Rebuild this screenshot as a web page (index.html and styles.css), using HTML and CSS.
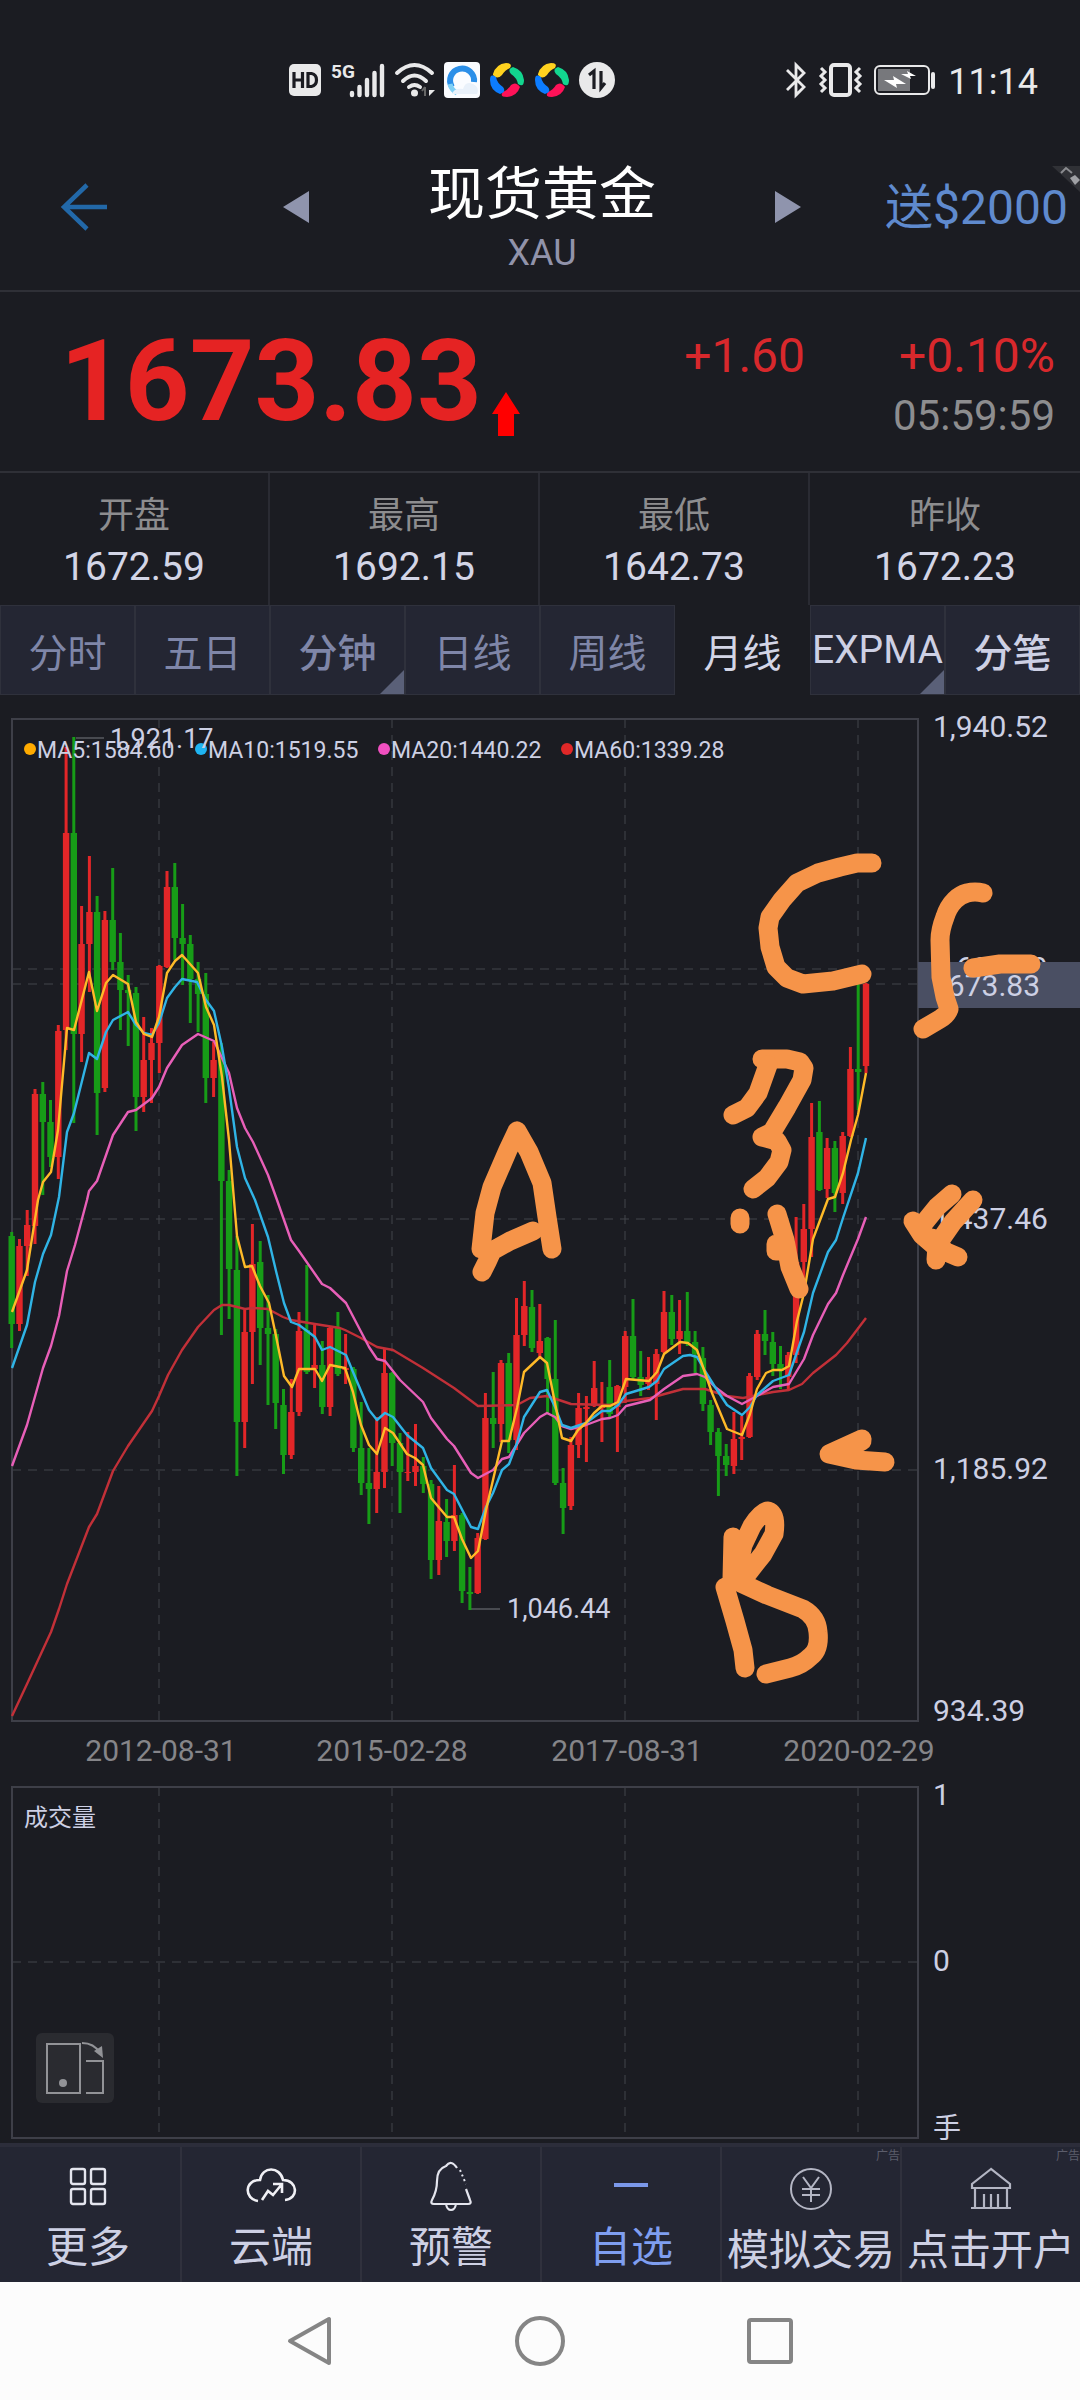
FILE: index.html
```html
<!DOCTYPE html>
<html lang="zh-CN">
<head>
<meta charset="utf-8">
<meta name="viewport" content="width=device-width, initial-scale=1">
<title>现货黄金 XAU</title>
<link rel="stylesheet" href="styles.css">
</head>
<body>
<div class="status">
  <div class="status-group">
    <svg width="32" height="32" viewBox="0 0 32 32"><rect width="32" height="32" rx="5" fill="#e9e9ea"/><path d="M5 8v16M13.500 8v16M5 16h8.500M19 9.500v13h3.500q5-1 5-6.500t-5-6.500z" fill="none" stroke="#1b1c22" stroke-width="3.200"/></svg>
    <svg width="56" height="36" viewBox="0 0 56 36"><text class="net" x="1" y="16">5G</text><path d="M22 31v2M29.500 25v8M37 18v15M44.500 11v22M52 4v29" stroke="#e9e9ea" stroke-width="4.400" stroke-linecap="round"/></svg>
    <svg width="40" height="34" viewBox="0 0 40 34"><g fill="none" stroke="#e9e9ea" stroke-width="4" stroke-linecap="round"><path d="M2 10Q19.500-6 37 10M8 18Q19.500 7 31 18M14 24Q19.500 20 25 24"/></g><circle cx="19.500" cy="30" r="3.500" fill="#e9e9ea"/><path d="M30 24v9M27 28l3-4" stroke="#666" stroke-width="2" fill="none"/><path d="M34 24v9l6-6h-6z" fill="#e9e9ea"/></svg>
    <svg width="36" height="36" viewBox="0 0 36 36"><rect width="36" height="36" rx="4" fill="#fafcff"/><path d="M8 25a12 12 0 1 1 22-5" fill="none" stroke="#2b8fe8" stroke-width="6"/><path d="M13 31a14 14 0 0 1-7-9" fill="none" stroke="#7fd0f5" stroke-width="5"/><path d="M8 32q2-6 11-5 2-7 7-6 8 2 8 8l-1 3z" fill="#e9f1fa"/></svg>
    <svg width="36" height="36" viewBox="0 0 36 36"><use href="#wheel"/></svg>
    <svg width="36" height="36" viewBox="0 0 36 36"><g id="wheel"><path d="M4 12Q7 2 17 1q7 0 4 5-5 2-8 7-5 5-9 0z" fill="#ffd21f"/><path d="M24 5q10 3 11 13 0 8-6 4-1-6-7-10-4-5 2-7z" fill="#12d68f"/><path d="M31 25q-3 9-13 10-8 0-4-5 5-2 8-7 5-4 9 2z" fill="#ff1258"/><path d="M11 32Q1 28 1 18q0-7 6-3 1 6 7 10 4 5-3 7z" fill="#0c7cff"/></g></svg>
    <svg width="36" height="36" viewBox="0 0 36 36"><circle cx="18" cy="18" r="18" fill="#e9e9ea"/><path d="M10 13l5-4v18M22 9v17l4-5" fill="none" stroke="#1b1c22" stroke-width="3.200"/></svg>
  </div>
  <div class="status-group">
    <svg width="22" height="36" viewBox="0 0 22 36"><path d="M2 8l17 17-8 8V3l8 8L2 28" fill="none" stroke="#e9e9ea" stroke-width="2.800"/></svg>
    <svg width="43" height="34" viewBox="0 0 43 34"><rect x="12" y="2" width="19" height="30" rx="3" fill="none" stroke="#e9e9ea" stroke-width="4"/><path d="M2 5l4 4-4 4 4 4-4 4 4 4-4 4M41 5l-4 4 4 4-4 4 4 4-4 4 4 4" fill="none" stroke="#e9e9ea" stroke-width="3"/></svg>
    <svg width="62" height="30" viewBox="0 0 62 30"><rect x="1" y="1" width="54" height="28" rx="5" fill="none" stroke="#e9e9ea" stroke-width="2"/><rect x="4" y="4" width="32" height="22" fill="#77787c"/><path d="M10 15h10l-1-4 13 8H22l1 4zM27 9h7l-1-3 9 5h-6l1 3z" fill="#fff"/><rect x="57" y="7" width="4" height="17" rx="2" fill="#e9e9ea"/></svg>
    <span class="clock">11:14</span>
  </div>
</div>

<header class="header">
  <button class="back" aria-label="返回"><svg width="48" height="48" viewBox="0 0 48 48"><path d="M46 24H4M26 2L3 24l23 22" fill="none" stroke="#2268a8" stroke-width="4.500"/></svg></button>
  <div class="instrument">
    <button aria-label="上一个"><svg width="26" height="32" viewBox="0 0 26 32"><path d="M26 0v32L0 16z" fill="#8f94ad"/></svg></button>
    <div class="name"><h1>现货黄金</h1><p>XAU</p></div>
    <button aria-label="下一个"><svg width="26" height="32" viewBox="0 0 26 32"><path d="M0 0v32l26-16z" fill="#8f94ad"/></svg></button>
  </div>
  <a class="promo" href="#">送$2000</a>
  <svg class="corner" width="28" height="28" viewBox="0 0 28 28"><path d="M0 0h28v26z" fill="#303136"/><path d="M9 7l5-5 6 5" fill="none" stroke="#8b8c90" stroke-width="2"/><path d="M18 12l5-3 5 5-5 5z" fill="#a0a1a5"/></svg>
</header>

<section class="quote">
  <strong class="last">1673.83</strong>
  <svg class="up" width="28" height="44" viewBox="0 0 28 44"><path d="M14 0l14 22h-6v22H6V22H0z" fill="#f00"/></svg>
  <div class="change">
    <span>+1.60</span><span>+0.10%</span>
    <time>05:59:59</time>
  </div>
</section>

<dl class="stats">
  <div><dt>开盘</dt><dd>1672.59</dd></div>
  <div><dt>最高</dt><dd>1692.15</dd></div>
  <div><dt>最低</dt><dd>1642.73</dd></div>
  <div><dt>昨收</dt><dd>1672.23</dd></div>
</dl>

<nav class="tabs">
  <button>分时</button>
  <button>五日</button>
  <button class="more strong">分钟</button>
  <button>日线</button>
  <button>周线</button>
  <button class="active">月线</button>
  <button class="more light">EXPMA</button>
  <button class="light strong">分笔</button>
</nav>

<main>
<svg class="chart" viewBox="0 695 1080 1080" role="img" aria-label="月线图">
  <g class="grid">
    <path d="M12 969H918M12 984H918M12 1219H918M12 1470H918"/>
    <path d="M159 719V1720M392 719V1720M625 719V1720M858 719V1720"/>
  </g>
  <rect class="frame" x="12" y="719" width="906" height="1002"/>
  <path class="lead" d="M76 738H104M470 1609H500"/>
  <g id="candles"></g>
  <g class="ma">
    <path stroke="#c23038" d="M12 1716L27 1684 51 1632 59 1609 67 1584 89 1527 97 1514 113 1471 128 1446 152 1411 159 1396 168 1375 182 1350 198 1327 214 1310 222 1305 229 1305 245 1309 253 1308 268 1309 283 1317 291 1320 315 1324 340 1328 345 1330 361 1338 377 1347 393 1350 423 1368 454 1388 478 1406 517 1405 530 1398 547 1396 571 1404 610 1405 626 1401 650 1398 683 1389 705 1389 727 1396 743 1398 773 1392 789 1390 802 1384 813 1373 836 1355 847 1343 866 1318"/>
    <path stroke="#e85fb8" d="M12 1466L27 1425 43 1368 51 1346 59 1316 67 1271 75 1245 87 1200 89 1191 97 1181 113 1135 128 1112 136 1110 152 1098 159 1087 167 1068 182 1045 198 1034 214 1041 229 1073 237 1108 245 1128 253 1142 268 1175 277 1200 284 1220 291 1240 299 1251 322 1284 330 1288 346 1303 369 1347 377 1359 385 1361 400 1380 423 1402 431 1418 447 1439 454 1446 471 1473 478 1478 493 1470 502 1459 509 1457 524 1433 540 1417 547 1413 555 1417 562 1426 571 1429 586 1425 602 1419 610 1418 618 1415 626 1406 650 1400 664 1389 683 1376 697 1374 705 1377 715 1387 727 1396 742 1404 757 1396 773 1387 789 1384 804 1359 813 1335 828 1304 836 1293 843 1275 858 1239 866 1217"/>
    <path stroke="#30b4e6" d="M12 1368L27 1325 35 1282 43 1254 51 1235 59 1197 67 1132 74 1113 89 1053 97 1059 106 1032 113 1020 128 1012 136 1025 144 1033 152 1035 159 1023 167 998 175 987 182 979 197 982 206 1000 214 1011 222 1047 229 1088 237 1147 245 1178 255 1200 268 1237 276 1271 284 1303 291 1322 299 1325 315 1337 322 1350 330 1347 346 1355 353 1372 369 1410 377 1420 385 1413 393 1417 407 1435 423 1448 431 1468 447 1490 454 1494 471 1527 478 1529 486 1507 493 1493 502 1470 509 1464 517 1443 524 1417 540 1392 547 1390 555 1407 562 1425 571 1428 586 1423 602 1411 610 1411 618 1405 626 1394 649 1387 657 1381 664 1369 683 1356 690 1355 697 1357 705 1371 715 1387 727 1405 742 1415 750 1407 757 1395 773 1381 789 1375 797 1352 804 1332 813 1293 828 1252 836 1240 843 1218 858 1173 866 1138"/>
    <path stroke="#ffba28" d="M12 1312L27 1270 38 1200 43 1182 51 1172 58 1130 67 1028 74 1030 89 972 97 1011 106 983 113 975 128 984 136 1022 144 1034 152 1037 159 1017 167 973 175 961 182 955 198 973 206 1007 214 1025 222 1077 229 1140 234 1200 237 1236 245 1267 252 1266 260 1286 269 1303 276 1336 284 1376 292 1387 299 1369 315 1369 322 1381 330 1365 345 1368 353 1392 361 1425 369 1445 377 1454 385 1428 393 1433 407 1454 415 1458 423 1465 431 1498 447 1517 454 1517 462 1539 471 1558 478 1551 486 1510 493 1480 502 1441 509 1441 517 1408 524 1372 540 1357 547 1363 555 1403 562 1438 571 1441 578 1430 586 1423 594 1413 602 1406 610 1406 618 1402 626 1379 649 1381 657 1372 664 1354 680 1342 688 1343 697 1350 703 1367 712 1393 727 1429 742 1435 750 1414 757 1389 766 1373 773 1370 782 1370 789 1366 797 1321 804 1293 813 1239 828 1199 835 1197 843 1173 851 1140 858 1115 866 1073"/>
  </g>
  <g class="legend">
    <circle cx="30" cy="749" r="6" fill="#ffab00"/><text x="37" y="758">MA5:1584.60</text>
    <circle cx="201" cy="749" r="6" fill="#1fb4f2"/><text x="208" y="758">MA10:1519.55</text>
    <circle cx="384" cy="749" r="6" fill="#f04fc0"/><text x="391" y="758">MA20:1440.22</text>
    <circle cx="567" cy="749" r="6" fill="#e02828"/><text x="574" y="758">MA60:1339.28</text>
  </g>
  <g class="mark"><text x="110" y="748">1,921.17</text><text x="507" y="1618">1,046.44</text></g>
  <g class="axis">
    <text x="933" y="737">1,940.52</text>
    <text x="933" y="978">1,688.99</text>
    <rect x="918" y="962" width="162" height="46" fill="#4a4f63"/>
    <text x="931" y="996">1673.83</text>
    <text x="933" y="1229">1,437.46</text>
    <text x="933" y="1479">1,185.92</text>
    <text x="933" y="1721">934.39</text>
  </g>
  <g class="dates">
    <text x="161" y="1761">2012-08-31</text>
    <text x="392" y="1761">2015-02-28</text>
    <text x="627" y="1761">2017-08-31</text>
    <text x="859" y="1761">2020-02-29</text>
  </g>
  <g class="ink">
    <path d="M872 863L857 863 840 867 818 873 797 883 782 900 770 917 768 928 770 947 776 967 787 978 803 984 833 981 862 974"/>
    <path d="M983 893Q975 891 967 893 960 895 955 900 948 907 945 917 940 930 940 940L941 977 945 997 949 1009Q947 1015 940 1019L923 1029"/>
    <path d="M973 968L1000 964H1031"/>
    <path d="M762 1059H787L800 1062 804 1068 802 1080 787 1107 772 1132 762 1137 777 1141 782 1150 779 1162 767 1178 753 1189"/>
    <path d="M768 1065L758 1093 747 1108 733 1115M740 1218V1224M777 1214L785 1240 790 1267 799 1289M776 1244V1251L785 1250"/>
    <path d="M952 1194L937 1207 924 1223M913 1221L922 1235 937 1248 958 1257M973 1200L953 1222 937 1245 936 1260M932 1238L944 1250"/>
    <path d="M517 1131L508 1150 492 1187 485 1213 481 1249 492 1251 510 1241 533 1231M492 1251L487 1262 482 1272M517 1131L529 1152 542 1183 547 1217 552 1249"/>
    <path d="M862 1439L829 1454 856 1460 885 1462M862 1441L840 1453"/>
    <path d="M733 1537L732 1579M743 1545L752 1526Q762 1511 768 1511 777 1514 774 1534L763 1554 748 1573 737 1580M743 1545L737 1572M741 1583L767 1595 803 1609Q817 1617 818 1632 820 1650 810 1657 802 1665 790 1668L766 1674M725 1587L735 1621 743 1650 745 1668"/>
  </g>
</svg>
<div class="volume">
  <svg class="chart" viewBox="0 1775 1080 368" role="img" aria-label="成交量">
    <path class="grid" d="M12 1962H918M159 1787V2138M392 1787V2138M625 1787V2138M858 1787V2138"/>
    <rect class="frame" x="12" y="1787" width="906" height="351"/>
    <text class="legend" x="24" y="1826">成交量</text>
    <g class="axis"><text x="933" y="1805">1</text><text x="933" y="1971">0</text><text class="unit" x="933" y="2138">手</text></g>
  </svg>
  <button class="rotate" aria-label="横屏"><svg width="78" height="70" viewBox="0 0 78 70"><g fill="none" stroke="#929397" stroke-width="2"><path d="M11 11h33v49H11zM50 28h17v32H50"/><path d="M46 10q12 0 18 10"/></g><path d="M58 18l8-5 1 12z" fill="#929397"/><circle cx="27" cy="50" r="4" fill="#929397"/></svg></button>
</div>
</main>

<nav class="dock">
  <a href="#"><svg width="40" height="50" viewBox="0 0 40 50"><g fill="none" stroke="#e4e5ee" stroke-width="2.400"><rect x="3" y="7" width="14" height="15" rx="2"/><rect x="23" y="7" width="14" height="15" rx="2"/><rect x="3" y="27" width="14" height="15" rx="2"/><rect x="23" y="27" width="14" height="15" rx="2"/></g></svg><span>更多</span></a>
  <a href="#"><svg width="50" height="50" viewBox="0 0 50 50"><path d="M12 39C-2 37-2 18 14 18 16 4 34 4 37 18 52 18 53 37 39 38M16 38l6-9 5 4 9-11M27 22h9v9" fill="none" stroke="#f0f0f5" stroke-width="2.600"/></svg><span>云端</span></a>
  <a href="#"><svg width="44" height="50" viewBox="0 0 44 50"><path d="M28 6Q22-3 17 4 8 7 8 19 8 29 3 38q-2 4 2 4h34q4 0 2-4l-4-11" fill="none" stroke="#e4e5ee" stroke-width="2.200"/><path d="M31 8l6 14" fill="none" stroke="#e4e5ee" stroke-width="2" stroke-dasharray="2 3"/><path d="M17 42q1 6 5 6t5-6" fill="none" stroke="#e4e5ee" stroke-width="2"/></svg><span>预警</span></a>
  <a href="#" class="current"><svg width="36" height="50" viewBox="0 0 36 50"><path d="M1 23h34" stroke="#7b98ea" stroke-width="4"/></svg><span>自选</span></a>
  <a href="#" class="ad"><i>广告</i><svg width="44" height="50" viewBox="0 0 44 50"><g fill="none" stroke="#b4b6c4" stroke-width="2"><circle cx="22" cy="24" r="20"/><path d="M14 12l8 11 8-11M22 23v14M13 24h18M13 30h18"/></g></svg><span>模拟交易</span></a>
  <a href="#" class="ad"><i>广告</i><svg width="44" height="50" viewBox="0 0 44 50"><path d="M22 4L3 19v4h38v-4zM6 23v19M15 29v13M22 29v13M29 29v13M38 23v19M2 43h40" fill="none" stroke="#b4b6c4" stroke-width="2.200"/></svg><span>点击开户</span></a>
</nav>

<footer class="system">
  <button aria-label="后退"><svg width="46" height="50" viewBox="0 0 46 50"><path d="M42 3v44L3 25z" fill="none" stroke="#858585" stroke-width="4" stroke-linejoin="round"/></svg></button>
  <button aria-label="主屏幕"><svg width="50" height="50" viewBox="0 0 50 50"><circle cx="25" cy="25" r="23" fill="none" stroke="#858585" stroke-width="4"/></svg></button>
  <button aria-label="最近任务"><svg width="46" height="46" viewBox="0 0 46 46"><rect x="2" y="2" width="42" height="42" rx="2" fill="none" stroke="#858585" stroke-width="4"/></svg></button>
</footer>
<script src="chart.js"></script>
</body>
</html>
```
FILE: styles.css
```css
* { box-sizing: border-box; margin: 0; padding: 0; }
body {
  display: flex;
  flex-direction: column;
  min-height: 100vh;
  background: #1b1c22;
  color: #d3d5e6;
  font-family: Roboto, "Noto Sans CJK SC", sans-serif;
}
button { border: 0; background: none; font: inherit; color: inherit; cursor: pointer; }
a { color: inherit; text-decoration: none; }
svg { display: block; flex: none; overflow: visible; }

.status { display: flex; justify-content: space-between; align-items: center; height: 160px; padding: 0 42px 0 289px; }
.status-group { display: flex; align-items: center; gap: 9px; }
.status-group + .status-group { gap: 12px; }
.net { font-size: 19px; font-weight: 700; fill: #e9e9ea; }
.clock { font-size: 36px; line-height: 40px; padding-top: 4px; color: #e9e9ea; }

.header {
  position: relative;
  display: grid;
  grid-template-columns: 1fr 48% 1fr;
  align-items: center;
  height: 132px;
  border-bottom: 2px solid #2f3037;
}
.back { justify-self: start; padding: 0 0 36px 61px; }
.instrument { display: flex; justify-content: space-between; align-items: center; padding-left: 2px; margin-right: -2px; }
.instrument button { padding-bottom: 36px; }
.name { text-align: center; padding-bottom: 4px; }
.name h1 { font-size: 57px; font-weight: 400; line-height: 60px; color: #fff; }
.name p { font-size: 36px; line-height: 56px; color: #9193aa; }
.promo { justify-self: end; padding: 0 12px 34px 0; font-size: 48px; line-height: 56px; color: #5f8ace; white-space: nowrap; }
.corner { position: absolute; top: 6px; right: 0; }

.quote { display: flex; align-items: center; height: 181px; padding: 0 25px 0 60px; border-bottom: 2px solid #2f3037; }
.last { font-size: 113px; line-height: 120px; font-weight: 700; color: #e52323; }
.up { margin: 64px 0 0 10px; }
.change { display: grid; grid-template-columns: auto auto; column-gap: 94px; margin-left: auto; padding-top: 8px; text-align: right; font-size: 48px; line-height: 60px; color: #d8282c; }
.change time { grid-column: 1 / -1; font-size: 42px; line-height: 60px; color: #8d8d8f; }

.stats { display: grid; grid-template-columns: repeat(4, 1fr); }
.stats div { height: 132px; padding-top: 18px; text-align: center; border-right: 2px solid #2a2b33; }
.stats div:last-child { border-right: 0; }
.stats dt { font-size: 36px; line-height: 50px; color: #8d8d8f; }
.stats dd { font-size: 39px; line-height: 52px; }

.tabs { display: grid; grid-template-columns: repeat(8, 1fr); height: 90px; }
.tabs button { position: relative; min-width: 0; font-size: 39px; background: #242633; border: 1px solid #2f313c; color: #7f86a8; white-space: nowrap; }
.tabs .strong { font-weight: 500; }
.tabs .active { background: #1b1c22; border-color: #1b1c22; color: #d3d5e6; }
.tabs .light { color: #cdd0e4; }
.tabs .more::after {
  content: "";
  position: absolute;
  right: 0;
  bottom: 0;
  border-style: solid;
  border-width: 0 0 24px 24px;
  border-color: transparent transparent #5a6078 transparent;
}

.chart { width: 100%; height: auto; }
.chart .frame { fill: none; stroke: #3e3f48; stroke-width: 2; }
.chart .grid { fill: none; stroke: #43444b; stroke-width: 1; stroke-dasharray: 9 7; }
.chart .lead { stroke: #77787f; stroke-width: 1; }
.chart text { fill: #cdd0e4; font-size: 30px; }
.chart .legend text { font-size: 23px; }
.chart text.legend { font-size: 24px; }
.chart .mark text { font-size: 27px; }
.chart text.unit { font-size: 28px; }
.chart .dates text { fill: #858589; text-anchor: middle; }
.ma path { fill: none; stroke-width: 2.400; stroke-linejoin: round; }
.ink path { fill: none; stroke: #f69449; stroke-width: 19; stroke-linecap: round; stroke-linejoin: round; }
.wick { fill: none; stroke-width: 3; }
.body { fill: none; stroke-width: 6.400; }
.rise { stroke: #e32628; }
.fall { stroke: #179c17; }

.volume { position: relative; }
.rotate { position: absolute; left: 36px; bottom: 40px; background: #2a2b30; border-radius: 6px; }

.dock { display: grid; grid-template-columns: repeat(6, 1fr); height: 139px; background: #242633; border-top: 4px solid #2c2d3a; }
.dock a { position: relative; display: flex; flex-direction: column; align-items: center; padding-top: 15px; border-left: 2px solid #30313d; font-size: 42px; line-height: 56px; white-space: nowrap; }
.dock a:first-child { border-left: 0; padding-right: 4px; }
.dock span { margin-top: 8px; color: #cdd0e4; }
.dock .current span { color: #7f9ef0; }
.dock .ad { padding-top: 18px; }
.dock i { position: absolute; top: 1px; right: 0; font-size: 12px; line-height: 16px; font-style: normal; color: #5b5d6b; }

.system { flex: 1; display: flex; justify-content: center; align-items: center; gap: 182px; min-height: 118px; background: #fcfcfc; }
```
FILE: chart.js
```js
// Monthly candles, oldest first: direction, high, body top, body bottom, low.
const rows = `f1232 1236 1324 1348,r1239 1246 1324 1331,r1210 1225 1246 1276,r1089 1094 1226 1244,f1082 1094 1122 1195,
f1100 1122 1157 1167,r1025 1031 1157 1179,r747 833 1030 1050,f737 833 1034 1123,r906 944 1034 1062,
r856 912 944 992,f896 912 1093 1135,r911 920 1088 1092,f868 920 962 970,f933 962 990 1030,
f975 990 993 1046,f987 993 1097 1131,r1017 1060 1097 1112,r1028 1043 1060 1103,r965 966 1043 1073,
r871 887 967 968,f863 887 938 960,f904 938 944 985,f935 944 979 1023,f962 979 994 1032,
f973 994 1078 1103,r1042 1060 1078 1097,f1043 1060 1181 1335,f1170 1181 1269 1319,f1236 1270 1422 1476,
r1310 1332 1422 1448,r1224 1264 1332 1384,f1241 1262 1328 1365,f1295 1328 1334 1405,f1329 1334 1403 1429,
f1389 1405 1455 1474,r1379 1412 1455 1459,r1312 1331 1412 1416,f1265 1330 1372 1374,r1325 1365 1369 1388,
f1341 1365 1407 1414,r1327 1328 1407 1416,f1312 1328 1374 1376,r1334 1368 1370 1384,f1367 1369 1448 1452,
f1402 1448 1483 1495,f1448 1483 1489 1524,r1417 1472 1489 1513,r1348 1373 1472 1488,f1372 1373 1443 1466,
f1433 1443 1472 1513,r1432 1472 1473 1481,r1424 1466 1472 1486,f1457 1466 1484 1493,f1480 1484 1560 1579,
r1486 1521 1560 1575,f1499 1522 1541 1557,r1465 1515 1541 1551,f1513 1515 1591 1603,f1567 1592 1594 1610,
r1533 1538 1593 1594,r1393 1418 1539 1540,f1372 1418 1424 1448,r1360 1363 1424 1442,f1353 1363 1440 1453,
r1298 1335 1440 1450,r1281 1306 1335 1346,f1290 1307 1348 1352,r1304 1341 1353 1357,f1337 1338 1379 1413,
f1320 1379 1483 1485,f1468 1483 1508 1534,r1437 1445 1506 1510,r1393 1408 1445 1458,r1396 1407 1409 1462,
r1361 1388 1406 1407,r1382 1406 1408 1442,f1360 1387 1414 1418,r1385 1386 1407 1452,r1331 1336 1387 1403,
f1299 1336 1377 1380,f1351 1377 1385 1396,r1357 1377 1384 1390,r1349 1354 1384 1420,r1291 1312 1352 1353,
f1295 1312 1339 1345,r1300 1331 1339 1354,f1292 1331 1342 1346,f1331 1342 1354 1373,f1347 1358 1404 1411,
f1400 1405 1432 1445,f1428 1432 1456 1496,f1444 1456 1465 1476,r1412 1439 1466 1474,r1416 1437 1439 1460,
r1373 1376 1437 1438,r1330 1334 1377 1380,f1310 1334 1341 1355,f1332 1342 1364 1376,f1346 1364 1371 1389,
r1352 1355 1377 1390,r1217 1262 1355 1363,r1204 1229 1262 1279,r1103 1137 1229 1257,f1101 1132 1190 1191,
r1138 1148 1189 1198,f1141 1148 1193 1212,r1132 1136 1193 1204,r1047 1069 1136 1137,f984 1069 1072 1110,
r983 984 1066 1073`.split(",").map(r => r.trim());

const first = 11.7;
const step = 7.766;
const paths = { r: { wick: "", body: "" }, f: { wick: "", body: "" } };
rows.forEach((row, i) => {
  const x = (first + step * i).toFixed(1);
  const [high, top, bottom, low] = row.slice(1).split(" ");
  paths[row[0]].wick += `M${x} ${high}V${low}`;
  paths[row[0]].body += `M${x} ${top}V${bottom}`;
});

const layer = document.getElementById("candles");
for (const [dir, name] of [["r", "rise"], ["f", "fall"]]) {
  for (const part of ["wick", "body"]) {
    const path = document.createElementNS("http://www.w3.org/2000/svg", "path");
    path.setAttribute("d", paths[dir][part]);
    path.setAttribute("class", `${part} ${name}`);
    layer.append(path);
  }
}
```
